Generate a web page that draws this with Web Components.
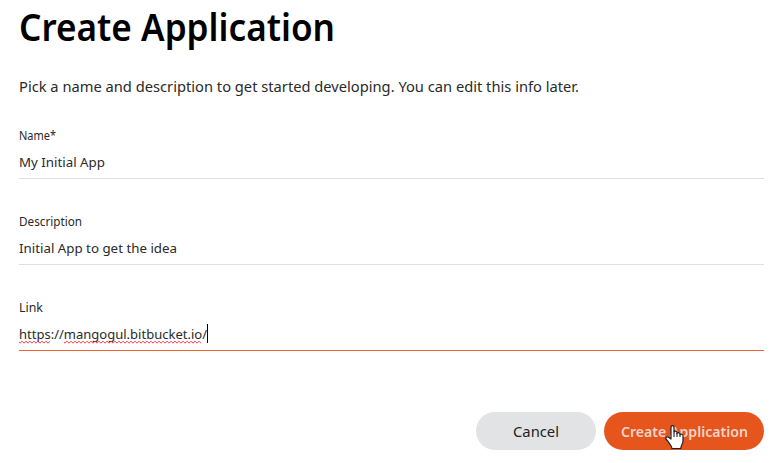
<!DOCTYPE html>
<html lang="en">
<head>
<meta charset="utf-8">
<title>Create Application</title>
<style>
html,body{margin:0;background:#fff}
body{width:782px;height:463px;overflow:hidden;font-family:"Noto Sans","Open Sans",sans-serif;color:#2a2a2a}
</style>
</head>
<body>
<application-form></application-form>
<script>
// A single line of text condensed horizontally to the width given in its attribute.
customElements.define('fit-text', class extends HTMLElement {
  connectedCallback() {
    const root = this.attachShadow({mode: 'open'});
    const w = Number(this.getAttribute('width'));
    root.innerHTML = `<style>:host{display:block;width:${w}px;white-space:nowrap}span{display:inline-block;transform-origin:0 50%}</style><span></span>`;
    const span = root.querySelector('span');
    span.textContent = this.getAttribute('text');
    span.style.transform = `scaleX(${w / span.getBoundingClientRect().width})`;
  }
});

customElements.define('spell-mark', class extends HTMLElement {
  connectedCallback() {
    this.attachShadow({mode: 'open'}).innerHTML = `<style>
      :host{position:absolute;height:3px;bottom:6px}svg{display:block;width:100%;height:3px}</style>
      <svg><defs><pattern id="w" width="4" height="3" patternUnits="userSpaceOnUse"><path d="M-1 .2L1 2.2L3 .2L5 2.2" fill="none" stroke="#f0203a" stroke-width=".9"/></pattern></defs><rect width="100%" height="3" fill="url(#w)"/></svg>`;
  }
});

customElements.define('form-field', class extends HTMLElement {
  connectedCallback() {
    const a = n => this.getAttribute(n);
    this.attachShadow({mode: 'open'}).innerHTML = `<style>
      :host{display:block;height:54px;margin-bottom:32px;color:#2a2a2a}
      .label{font-size:12px;line-height:22px;height:20px}
      .value{position:relative;display:flex;font-size:13.3px;line-height:35px;height:33px;border-bottom:1px solid #dedfe1}
      :host([focused]) .value{border-color:#f1622f}
      .caret{width:1px;height:19px;margin-top:7px;background:#000}
      </style>
      <div class="label"><fit-text width="${a('label-width')}" text="${a('label')}"></fit-text></div>
      <div class="value"><fit-text width="${a('value-width')}" text="${a('value')}"></fit-text>${this.hasAttribute('focused') ? '<i class="caret"></i>' : ''}<slot></slot></div>`;
  }
});

customElements.define('pill-button', class extends HTMLElement {
  connectedCallback() {
    this.attachShadow({mode: 'open'}).innerHTML = `<style>
      :host{display:flex;position:relative;justify-content:center;width:120px;height:38px;border-radius:19px;background:#e1e3e5;color:#222;font-size:15px;line-height:39px}
      :host([primary]){width:160px;background:#e6551c;color:#f0d3c8;font-weight:600}
      </style><fit-text width="${this.getAttribute('text-width')}" text="${this.getAttribute('text')}"></fit-text><slot></slot>`;
  }
});

customElements.define('hand-pointer', class extends HTMLElement {
  connectedCallback() {
    this.attachShadow({mode: 'open'}).innerHTML = `<style>:host{position:absolute;left:61px;top:13px;width:19px;height:25px}svg{display:block}</style>
      <svg width="19" height="25" viewBox="0 0 19 25"><path d="M6 14V2.5C6 .1 9 .1 9 2.5V7C9.5 5.7 12 6 12 7.6V8.4C13 7.2 15 7.6 15 9.1V9.8C16 8.6 18 9.2 18 10.8V16C18 19 16 20 15.7 23.5H7C6.7 20.5 4.5 19 3.2 16.7L1 14C.1 12.7 1.6 11.4 3 12L6 14Z" fill="#fff" stroke="#1c2029" stroke-width="1.2" stroke-linejoin="round"/><path d="M9 6.5V12M12 8V12M15 9.5V12" stroke="#1c2029" stroke-width="1.1"/></svg>`;
  }
});

customElements.define('application-form', class extends HTMLElement {
  connectedCallback() {
    this.attachShadow({mode: 'open'}).innerHTML = `<style>
      :host{display:block;padding:0 18px 0 19px}
      h1{margin:0;height:56px;line-height:52px;font-size:38px;font-weight:600;color:#000}
      p{margin:18px 0 25px;height:26px;line-height:24px;font-size:15px}
      footer{display:flex;justify-content:flex-end;gap:8px;margin-top:61px}
      </style>
      <h1><fit-text width="316" text="Create Application"></fit-text></h1>
      <p><fit-text width="560" text="Pick a name and description to get started developing. You can edit this info later."></fit-text></p>
      <form-field label="Name*" label-width="37" value="My Initial App" value-width="86"></form-field>
      <form-field label="Description" label-width="63" value="Initial App to get the idea" value-width="158"></form-field>
      <form-field focused label="Link" label-width="24" value="https://mangogul.bitbucket.io/" value-width="188"><spell-mark style="left:0;width:31px"></spell-mark><spell-mark style="left:45px;width:137px"></spell-mark></form-field>
      <footer><pill-button text="Cancel" text-width="46"></pill-button><pill-button primary text="Create Application" text-width="127"><hand-pointer></hand-pointer></pill-button></footer>`;
  }
});
</script>
</body>
</html>
